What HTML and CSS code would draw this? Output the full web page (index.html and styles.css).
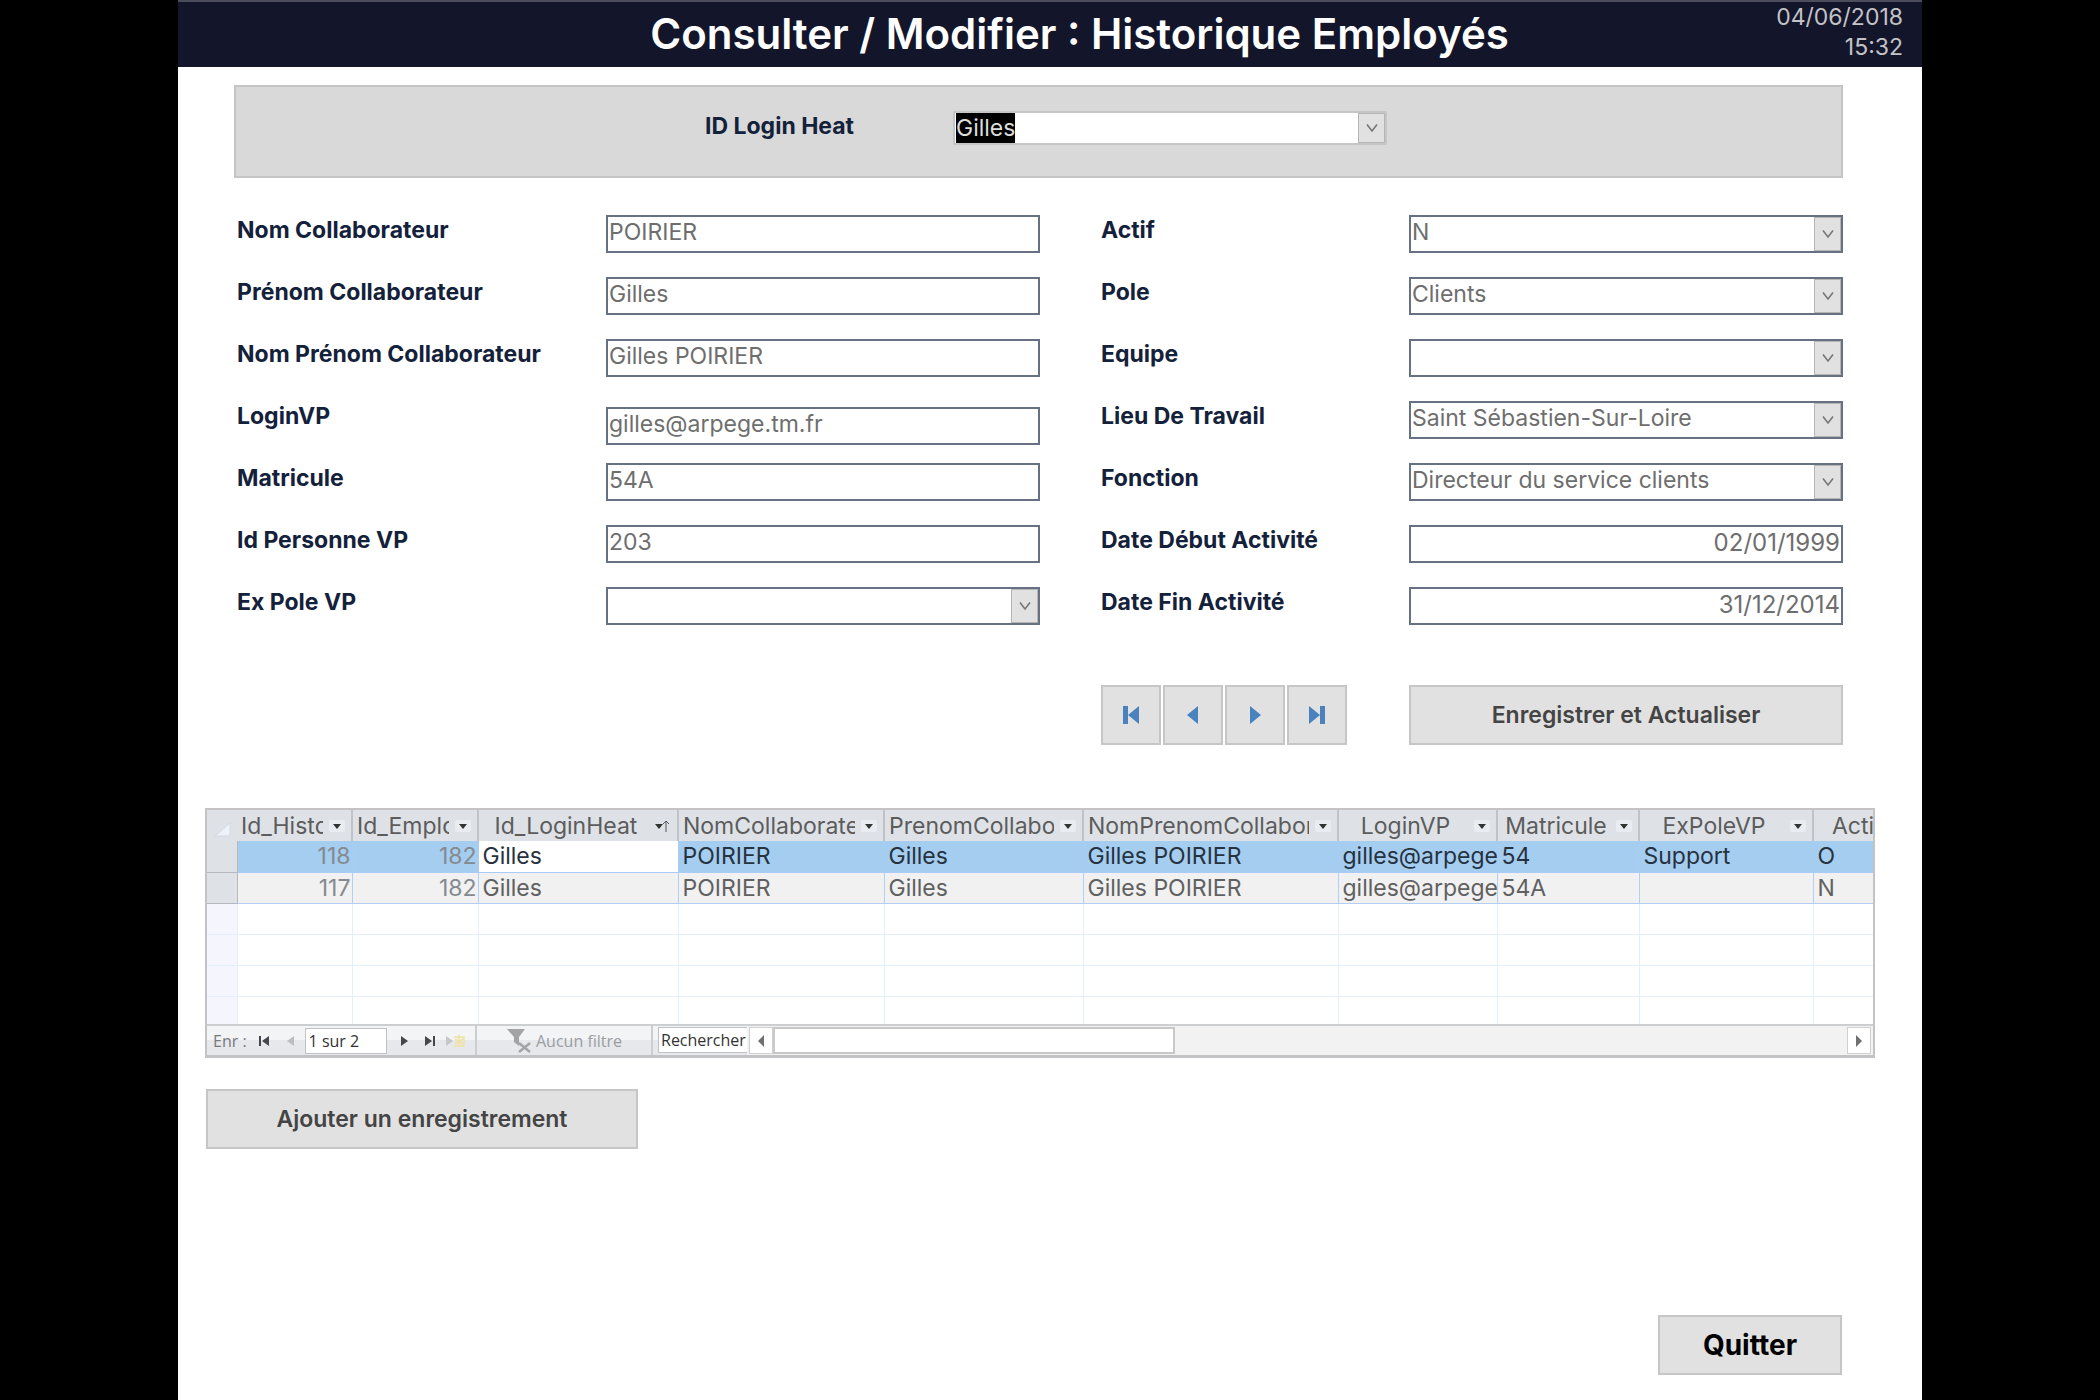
FILE: index.html
```html
<!DOCTYPE html>
<html lang="fr">
<head>
<meta charset="utf-8">
<title>Historique Employés</title>
<link rel="stylesheet" href="styles.css">
</head>
<body>
<svg class="sprite" aria-hidden="true">
  <symbol id="chevron" viewBox="0 0 12 10"><path d="M1 1.500 6 8l5-6.500" fill="none" stroke="#777" stroke-width="1.600"/></symbol>
  <symbol id="caret" viewBox="0 0 16 12"><rect width="16" height="12" rx="2" fill="#e9edf1"/><path d="M4 4h8L8 9z" fill="#333"/></symbol>
  <symbol id="first" viewBox="0 0 18 18"><path d="M1 0h5v18H1zM17 0v18L6 9z"/></symbol>
  <symbol id="prev" viewBox="0 0 18 18"><path d="M14 0v18L3 9z"/></symbol>
  <symbol id="next" viewBox="0 0 18 18"><path d="M4 0v18L15 9z"/></symbol>
  <symbol id="last" viewBox="0 0 18 18"><path d="M12 0h5v18h-5zM1 0v18L12 9z"/></symbol>
</svg>
<div class="app">
  <header class="banner">
    <h1 class="banner-title">Consulter / Modifier : Historique Employés</h1>
    <div class="banner-clock"><time>04/06/2018</time><time>15:32</time></div>
  </header>

  <main class="content">
    <div class="finder">
      <label class="label" for="login-heat">ID Login Heat</label>
      <div class="combo combo-light">
        <input class="combo-value" id="login-heat" type="text" value="Gilles">
        <button class="combo-arrow" type="button" aria-label="Ouvrir la liste"><svg><use href="#chevron"/></svg></button>
      </div>
    </div>

    <form class="record">
      <div class="column column-left">
        <div class="row"><label class="label" for="nom">Nom Collaborateur</label><input class="field" id="nom" type="text" value="POIRIER"></div>
        <div class="row"><label class="label" for="prenom">Prénom Collaborateur</label><input class="field" id="prenom" type="text" value="Gilles"></div>
        <div class="row"><label class="label" for="nomprenom">Nom Prénom Collaborateur</label><input class="field" id="nomprenom" type="text" value="Gilles POIRIER"></div>
        <div class="row"><label class="label" for="loginvp">LoginVP</label><input class="field field-low" id="loginvp" type="text" value="gilles@arpege.tm.fr"></div>
        <div class="row"><label class="label" for="matricule">Matricule</label><input class="field" id="matricule" type="text" value="54A"></div>
        <div class="row"><label class="label" for="personne">Id Personne VP</label><input class="field" id="personne" type="text" value="203"></div>
        <div class="row"><label class="label" for="expole">Ex Pole VP</label><div class="combo"><select class="combo-value" id="expole"><option></option></select><span class="combo-arrow"><svg><use href="#chevron"/></svg></span></div></div>
      </div>
      <div class="column column-right">
        <div class="row"><label class="label" for="actif">Actif</label><div class="combo"><select class="combo-value" id="actif"><option>N</option></select><span class="combo-arrow"><svg><use href="#chevron"/></svg></span></div></div>
        <div class="row"><label class="label" for="pole">Pole</label><div class="combo"><select class="combo-value" id="pole"><option>Clients</option></select><span class="combo-arrow"><svg><use href="#chevron"/></svg></span></div></div>
        <div class="row"><label class="label" for="equipe">Equipe</label><div class="combo"><select class="combo-value" id="equipe"><option></option></select><span class="combo-arrow"><svg><use href="#chevron"/></svg></span></div></div>
        <div class="row"><label class="label" for="lieu">Lieu De Travail</label><div class="combo"><select class="combo-value" id="lieu"><option>Saint Sébastien-Sur-Loire</option></select><span class="combo-arrow"><svg><use href="#chevron"/></svg></span></div></div>
        <div class="row"><label class="label" for="fonction">Fonction</label><div class="combo"><select class="combo-value" id="fonction"><option>Directeur du service clients</option></select><span class="combo-arrow"><svg><use href="#chevron"/></svg></span></div></div>
        <div class="row"><label class="label" for="debut">Date Début Activité</label><input class="field field-date" id="debut" type="text" value="02/01/1999"></div>
        <div class="row"><label class="label" for="fin">Date Fin Activité</label><input class="field field-date" id="fin" type="text" value="31/12/2014"></div>
        <div class="row row-actions">
          <div class="pager">
            <button class="button pager-button" type="button" aria-label="Premier"><svg><use href="#first"/></svg></button>
            <button class="button pager-button" type="button" aria-label="Précédent"><svg><use href="#prev"/></svg></button>
            <button class="button pager-button" type="button" aria-label="Suivant"><svg><use href="#next"/></svg></button>
            <button class="button pager-button" type="button" aria-label="Dernier"><svg><use href="#last"/></svg></button>
          </div>
          <button class="button" type="button">Enregistrer et Actualiser</button>
        </div>
      </div>
    </form>
  </main>

  <section class="datasheet">
    <table class="grid">
      <colgroup><col class="w-mark"><col class="w-hist"><col class="w-empl"><col class="w-login"><col class="w-nom"><col class="w-prenom"><col class="w-nomprenom"><col class="w-loginvp"><col class="w-matricule"><col class="w-expole"><col></colgroup>
      <thead>
        <tr>
          <th class="corner"><svg viewBox="0 0 16 14"><path d="M15 0v13H0z" fill="#eef2f7" stroke="#cfd9e6"/></svg></th>
          <th><div class="head"><span class="head-text">Id_Historique</span><svg><use href="#caret"/></svg></div></th>
          <th><div class="head"><span class="head-text">Id_Employe</span><svg><use href="#caret"/></svg></div></th>
          <th><div class="head"><span class="head-text">Id_LoginHeat</span><svg viewBox="0 0 16 12"><path d="M0 4h8L4 9z" fill="#333"/><path d="M11 12V1M8 4l3-3 3 3" fill="none" stroke="#555"/></svg></div></th>
          <th><div class="head"><span class="head-text">NomCollaborateur</span><svg><use href="#caret"/></svg></div></th>
          <th><div class="head"><span class="head-text">PrenomCollaborateur</span><svg><use href="#caret"/></svg></div></th>
          <th><div class="head"><span class="head-text">NomPrenomCollaborateur</span><svg><use href="#caret"/></svg></div></th>
          <th><div class="head"><span class="head-text">LoginVP</span><svg><use href="#caret"/></svg></div></th>
          <th><div class="head"><span class="head-text">Matricule</span><svg><use href="#caret"/></svg></div></th>
          <th><div class="head"><span class="head-text">ExPoleVP</span><svg><use href="#caret"/></svg></div></th>
          <th class="head-cut">Actif</th>
        </tr>
      </thead>
      <tbody>
        <tr class="selected"><td></td><td class="number">118</td><td class="number">182</td><td class="current">Gilles</td><td>POIRIER</td><td>Gilles</td><td>Gilles POIRIER</td><td>gilles@arpege.tm.fr</td><td>54</td><td>Support</td><td>O</td></tr>
        <tr class="filled"><td></td><td class="number">117</td><td class="number">182</td><td>Gilles</td><td>POIRIER</td><td>Gilles</td><td>Gilles POIRIER</td><td>gilles@arpege.tm.fr</td><td>54A</td><td></td><td>N</td></tr>
        <tr><td></td><td></td><td></td><td></td><td></td><td></td><td></td><td></td><td></td><td></td><td></td></tr>
        <tr><td></td><td></td><td></td><td></td><td></td><td></td><td></td><td></td><td></td><td></td><td></td></tr>
        <tr><td></td><td></td><td></td><td></td><td></td><td></td><td></td><td></td><td></td><td></td><td></td></tr>
        <tr class="last"><td></td><td></td><td></td><td></td><td></td><td></td><td></td><td></td><td></td><td></td><td></td></tr>
      </tbody>
    </table>
    <div class="status">
      <div class="status-records">
        <label for="position">Enr :</label>
        <button class="mini" type="button" aria-label="Premier"><svg viewBox="0 0 12 12"><path d="M1 1h2v10H1zM11 1v10L4 6z"/></svg></button>
        <button class="mini mini-off" type="button" aria-label="Précédent"><svg viewBox="0 0 12 12"><path d="M10 1v10L3 6z"/></svg></button>
        <input class="status-position" id="position" type="text" value="1 sur 2">
        <button class="mini" type="button" aria-label="Suivant"><svg viewBox="0 0 12 12"><path d="M3 1v10l7-5z"/></svg></button>
        <button class="mini" type="button" aria-label="Dernier"><svg viewBox="0 0 12 12"><path d="M9 1h2v10H9zM1 1v10l7-5z"/></svg></button>
        <button class="mini mini-new" type="button" aria-label="Nouveau"><svg viewBox="0 0 20 12"><path d="M0 1v10l7-5z" fill="#c4c6ca"/><path d="M8 2h10v9H8M13 0v11M9 4l8 5M17 4 9 9" fill="none" stroke="#f0e2a4" stroke-width="1.500"/></svg></button>
      </div>
      <div class="status-filter">
        <svg viewBox="0 0 24 24"><path d="M0 0h18l-6 8v9l-5-4V8z" fill="#a3a3a6"/><path d="m12 14 11 9M23 14l-11 9" fill="none" stroke="#a3a3a6" stroke-width="2.500"/></svg>
        <span>Aucun filtre</span>
      </div>
      <input class="status-search" type="text" value="Rechercher" aria-label="Rechercher">
      <div class="scrollbar">
        <button class="scroll-button" type="button" aria-label="Défiler à gauche"><svg viewBox="0 0 12 12"><path d="M9 0v12L3 6z"/></svg></button>
        <div class="scroll-track"><div class="scroll-thumb"></div></div>
        <button class="scroll-button" type="button" aria-label="Défiler à droite"><svg viewBox="0 0 12 12"><path d="M3 0v12l6-6z"/></svg></button>
      </div>
    </div>
  </section>

  <footer class="footer">
    <button class="button button-add" type="button">Ajouter un enregistrement</button>
    <button class="button button-quit" type="button">Quitter</button>
  </footer>
</div>
<script src="main.js"></script>
</body>
</html>
```
FILE: main.js
```js
// The search box opens ready to be typed over.
const login = document.getElementById("login-heat");
login.focus();
login.select();
```
FILE: styles.css
```css
* { box-sizing: border-box; }

body {
  margin: 0;
  padding: 0 178px;
  background: #000;
  color: #6e6e6e;
  font: 23px/30px "Century Gothic", Inter, sans-serif;
}

button, input, select { font: inherit; color: inherit; }

.sprite { display: none; }

.app {
  display: flex;
  flex-direction: column;
  min-height: 100vh;
  background: #fff;
}

.banner {
  display: grid;
  grid-template-columns: 1fr auto 1fr;
  height: 67px;
  padding-right: 19px;
  border-top: 2px solid #4b4d5c;
  background: #13152a;
  color: #fff;
}

.banner-title {
  grid-column: 2;
  margin: 0 0 0 78px;
  font-size: 42px;
  line-height: 64px;
  font-weight: 600;
  white-space: nowrap;
}

.banner-clock {
  display: grid;
  align-content: start;
  justify-items: end;
  color: #c3c3c8;
}

.content { padding: 18px 79px 0 56px; }

.finder {
  display: flex;
  justify-content: space-between;
  height: 93px;
  padding: 24px 454px 0 469px;
  border: 2px solid #c4c4c4;
  background: #d9d9d9;
}

.label {
  color: #14213a;
  font-weight: 700;
  white-space: nowrap;
}

.record {
  display: grid;
  grid-template-columns: 803fr 742fr;
  gap: 61px;
  padding: 37px 0 0 3px;
}

.column {
  display: flex;
  flex-direction: column;
  gap: 18px;
}

.row {
  display: grid;
  align-items: start;
  height: 44px;
}

.column-left .row { grid-template-columns: 369fr 434fr; }
.column-right .row { grid-template-columns: 308fr 434fr; }
.row-actions { margin-top: 36px; }

.field,
.combo {
  width: 100%;
  height: 38px;
  border: 2px solid #667182;
  border-radius: 0;
  background: #fff;
}

.field { padding: 0 1px 4px; }
.field-low { align-self: end; }
.field-date { font-size: 24px; text-align: right; }

.combo { display: grid; }

.combo-light {
  width: 434px;
  height: 34px;
  border-color: #c6c6c6;
}

.combo-value {
  grid-area: 1 / 1;
  appearance: none;
  min-width: 0;
  padding: 0 27px 4px 1px;
  border: 0;
  border-radius: 0;
  outline: 0;
  background: transparent;
}

.combo-light .combo-value { padding-bottom: 0; background: #fff; }
.combo-value::selection { background: #000; color: #ddd; }

.combo-arrow {
  grid-area: 1 / 1;
  justify-self: end;
  display: grid;
  place-items: center;
  width: 27px;
  padding: 0;
  border: 1px solid #b5b5b5;
  background: #e1e1e1;
  pointer-events: none;
}

.combo-arrow svg { width: 14px; height: 10px; }

.button {
  height: 60px;
  padding: 0;
  border: 2px solid #c6c6c6;
  background: #e1e1e1;
  color: #444;
  font-weight: 600;
}

.pager {
  display: flex;
  gap: 2px;
}

.pager-button {
  display: grid;
  place-items: center;
  width: 60px;
}

.pager-button svg {
  width: 18px;
  height: 18px;
  fill: #4a82bd;
}

.datasheet {
  margin: 79px 47px 0 27px;
  border: 2px solid #c3c3c5;
  border-bottom-width: 3px;
}

.grid {
  width: 100%;
  table-layout: fixed;
  border-collapse: collapse;
}

.w-mark { width: 30px; }
.w-hist { width: 115px; }
.w-empl { width: 126px; }
.w-login { width: 200px; }
.w-nom { width: 206px; }
.w-prenom { width: 199px; }
.w-nomprenom { width: 255px; }
.w-loginvp { width: 159px; }
.w-matricule { width: 142px; }
.w-expole { width: 174px; }

.grid th {
  height: 31px;
  padding: 0;
  overflow: hidden;
  border-right: 2px solid #bfc3c8;
  background: #dee2e7;
  color: #5c5c5c;
  font-weight: 400;
}

.grid .corner { border-right: 0; }
.corner svg { width: 16px; height: 14px; margin: 8px 0 0 8px; display: block; }
.grid .head-cut { padding-left: 18px; border-right: 0; text-align: left; }

.head {
  display: flex;
  align-items: center;
  gap: 6px;
  padding: 0 6px 0 4px;
}

.head-text {
  flex: 1;
  min-width: 0;
  overflow: hidden;
  text-align: center;
  white-space: nowrap;
}

.head svg {
  flex: none;
  width: 16px;
  height: 12px;
}

.grid td {
  height: 31px;
  padding: 0 2px 0 4px;
  overflow: hidden;
  border: 1px solid #e4effc;
  border-width: 0 1px 1px 0;
  line-height: 30px;
  white-space: nowrap;
}

.grid td:first-child { background: #f5f6fd; }
.grid td:last-child { border-right: 0; }
.grid .last td { height: 28px; border-bottom: 0; }

.grid .selected td {
  border-color: #a9cbf5;
  background: #a4cdf0;
  color: #27323f;
}

.grid .filled td {
  border-color: #b4cff5;
  background: #f1f1f1;
  color: #606060;
}

.grid .selected td:first-child,
.grid .filled td:first-child {
  border-color: #b6bac0;
  background: #dee2e7;
}

.grid .selected .current { background: #fff; }

.grid .selected .number,
.grid .filled .number {
  padding-right: 1px;
  color: #858a90;
  text-align: right;
}

.status {
  display: flex;
  height: 31px;
  border-top: 2px solid #ccced0;
  background: linear-gradient(#f3f4f6 50%, #e6e8eb 50%);
  color: #77797d;
  font: 16px/28px "Segoe UI", "Open Sans", sans-serif;
}

.status-records {
  display: flex;
  align-items: center;
  width: 270px;
  padding-left: 6px;
  border-right: 2px solid #ccced0;
  white-space: nowrap;
}

.mini {
  display: grid;
  place-items: center;
  width: 26px;
  height: 24px;
  padding: 0;
  border: 0;
  background: none;
  fill: #45474d;
}

.mini:first-of-type { margin-left: 4px; }
.mini svg { width: 12px; height: 12px; }
.mini-off { fill: #bcbec3; }
.mini-new svg { width: 20px; }

.status-position,
.status-search {
  height: 26px;
  padding: 0 3px;
  border: 1px solid #bfc1c4;
  background: #fff;
  color: #333;
}

.status-position { width: 82px; margin: 0 4px 0 2px; }

.status-filter {
  display: flex;
  align-items: center;
  gap: 5px;
  width: 176px;
  padding-left: 30px;
  border-right: 2px solid #ccced0;
  color: #9b9da1;
  white-space: nowrap;
}

.status-filter svg { width: 24px; height: 24px; }

.status-search {
  width: 89px;
  margin: 1px 0 0 5px;
  padding: 0 0 0 2px;
  border-right: 0;
}

.scrollbar {
  display: flex;
  flex: 1;
  padding: 1px 2px;
  background: #f2f2f2;
}

.scroll-button {
  display: grid;
  place-items: center;
  width: 24px;
  padding: 0;
  border: 1px solid #d0d0d0;
  background: #fff;
  fill: #707070;
}

.scroll-button svg { width: 12px; height: 12px; }

.scroll-track {
  display: flex;
  flex: 1;
}

.scroll-thumb {
  width: 402px;
  border: 2px solid #c8c8c8;
  background: #fff;
}

.footer {
  display: flex;
  flex: 1;
  justify-content: space-between;
  padding: 31px 80px 25px 28px;
}

.button-add { width: 432px; }

.button-quit {
  align-self: end;
  width: 184px;
  color: #000;
  font-size: 28px;
  font-weight: 700;
}
```
